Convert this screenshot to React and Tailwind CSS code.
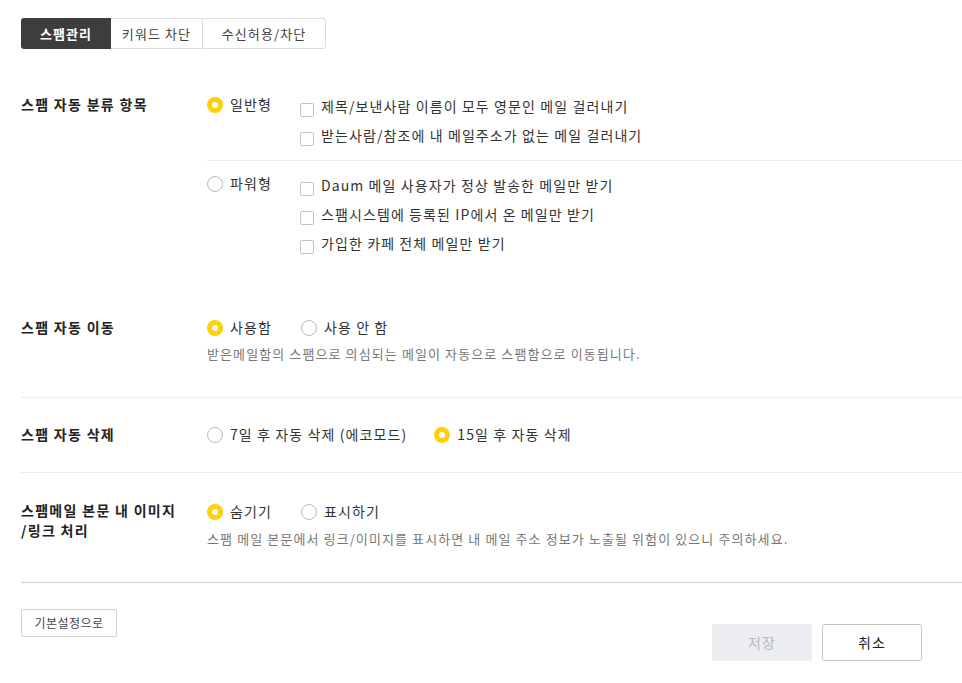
import React from "react";

function Radio({ checked, label }) {
  return (
    <div className="flex items-center h-[19px]">
      {checked ? (
        <span className="w-[16px] h-[16px] rounded-full bg-[#fcd10a] flex items-center justify-center shrink-0">
          <span className="w-[6px] h-[6px] rounded-full bg-white" />
        </span>
      ) : (
        <span className="w-[16px] h-[16px] rounded-full border border-[#b9b9b9] bg-white shrink-0" />
      )}
      <span className="ml-[7px] text-[14px] tracking-[1.1px] text-[#333] whitespace-nowrap">{label}</span>
    </div>
  );
}

function Check({ label }) {
  return (
    <div className="flex items-start h-[29px] pt-[2px]">
      <span className="mt-[6px] w-[14px] h-[14px] rounded-[2px] border border-[#c4c4c4] bg-white shrink-0" />
      <span className="ml-[7px] text-[14px] leading-[19px] tracking-[1.1px] text-[#333] whitespace-nowrap">{label}</span>
    </div>
  );
}

export default function App() {
  return (
    <div
      className="w-[962px] h-[683px] bg-white pl-[21px] pt-[18px] overflow-hidden"
      style={{ fontFamily: "'Noto Sans CJK KR', 'Noto Sans', sans-serif" }}
    >
      {/* Tabs */}
      <div className="flex h-[31px] text-[13px] tracking-[1.1px]">
        <div className="w-[90px] flex items-center justify-center bg-[#3d3d3d] text-white font-bold rounded-l-[3px]">
          스팸관리
        </div>
        <div className="w-[91px] flex items-center justify-center border-y border-[#dcdcdc] text-[#444]">
          키워드 차단
        </div>
        <div className="w-[124px] flex items-center justify-center border border-[#dcdcdc] text-[#444] rounded-r-[3px]">
          수신허용/차단
        </div>
      </div>

      {/* Section 1 */}
      <div className="flex mt-[46px]">
        <div className="w-[186px] text-[14px] leading-[19px] tracking-[1.3px] font-bold text-[#222]">스팸 자동 분류 항목</div>
        <div className="flex-1 flex flex-col">
          <div className="flex items-start pb-[7px] border-b border-[#ececec]">
            <div className="w-[93px]">
              <Radio checked label="일반형" />
            </div>
            <div className="flex flex-col">
              <Check label="제목/보낸사람 이름이 모두 영문인 메일 걸러내기" />
              <Check label="받는사람/참조에 내 메일주소가 없는 메일 걸러내기" />
            </div>
          </div>
          <div className="flex items-start pt-[13px]">
            <div className="w-[93px]">
              <Radio label="파워형" />
            </div>
            <div className="flex flex-col">
              <Check label="Daum 메일 사용자가 정상 발송한 메일만 받기" />
              <Check label="스팸시스템에 등록된 IP에서 온 메일만 받기" />
              <Check label="가입한 카페 전체 메일만 받기" />
            </div>
          </div>
        </div>
      </div>

      {/* Section 2 */}
      <div className="flex mt-[57px] pb-[34px] border-b border-[#ececec]">
        <div className="w-[186px] text-[14px] leading-[19px] tracking-[1.3px] font-bold text-[#222]">스팸 자동 이동</div>
        <div className="flex-1 flex flex-col">
          <div className="flex gap-[29px]">
            <Radio checked label="사용함" />
            <Radio label="사용 안 함" />
          </div>
          <div className="mt-[8px] text-[13px] leading-[18px] tracking-[1.1px] text-[#777]">
            받은메일함의 스팸으로 의심되는 메일이 자동으로 스팸함으로 이동됩니다.
          </div>
        </div>
      </div>

      {/* Section 3 */}
      <div className="flex pt-[27px] pb-[28px] border-b border-[#ececec]">
        <div className="w-[186px] text-[14px] leading-[19px] tracking-[1.3px] font-bold text-[#222]">스팸 자동 삭제</div>
        <div className="flex-1 flex gap-[27px]">
          <Radio label="7일 후 자동 삭제 (에코모드)" />
          <Radio checked label="15일 후 자동 삭제" />
        </div>
      </div>

      {/* Section 4 */}
      <div className="flex pt-[28px] pb-[34px] border-b border-[#cfcfcf]">
        <div className="w-[186px] -mt-[1px] text-[14px] leading-[20px] tracking-[1.3px] font-bold text-[#222] whitespace-nowrap">
          스팸메일 본문 내 이미지
          <br />
          /링크 처리
        </div>
        <div className="flex-1 flex flex-col pt-[1px]">
          <div className="flex gap-[29px]">
            <Radio checked label="숨기기" />
            <Radio label="표시하기" />
          </div>
          <div className="mt-[9px] text-[13px] leading-[18px] tracking-[1.1px] text-[#777] whitespace-nowrap">
            스팸 메일 본문에서 링크/이미지를 표시하면 내 메일 주소 정보가 노출될 위험이 있으니 주의하세요.
          </div>
        </div>
      </div>

      {/* Footer */}
      <div className="flex justify-between items-start mt-[26px] pr-[40px]">
        <button className="h-[28px] w-[96px] border border-[#cfcfcf] rounded-[2px] bg-white text-[12px] tracking-[0.5px] text-[#444]">
          기본설정으로
        </button>
        <div className="flex gap-[10px] mt-[15px]">
          <button className="w-[100px] h-[37px] rounded-[3px] bg-[#ebedf0] text-[14px] tracking-[1px] text-[#b8b8b8]">저장</button>
          <button className="w-[100px] h-[37px] rounded-[3px] border border-[#c4c4c4] bg-white text-[14px] tracking-[1px] text-[#222]">
            취소
          </button>
        </div>
      </div>
    </div>
  );
}
